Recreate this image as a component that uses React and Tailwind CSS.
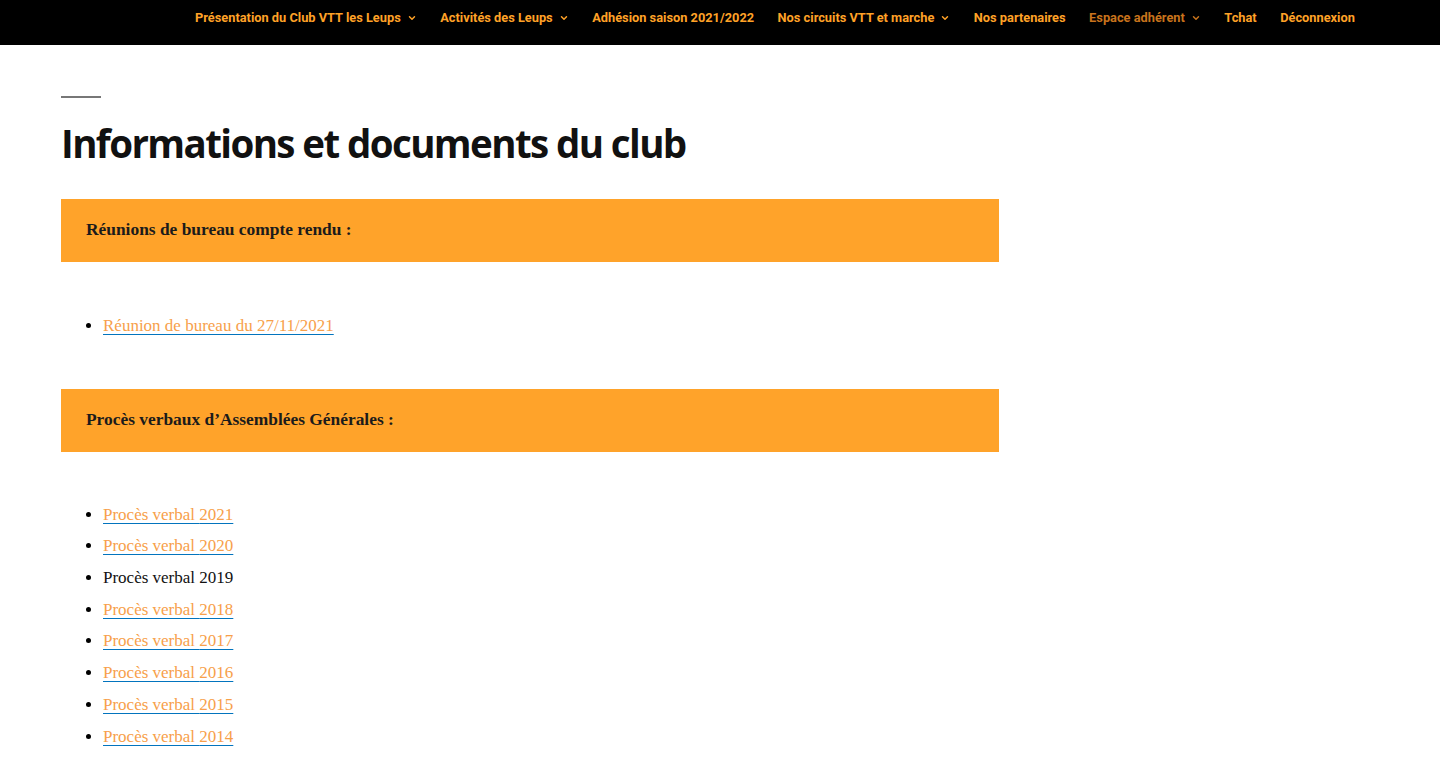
import { ChevronDown } from "lucide-react";

const navItems = [
  { label: "Présentation du Club VTT les Leups", menu: true },
  { label: "Activités des Leups", menu: true },
  { label: "Adhésion saison 2021/2022" },
  { label: "Nos circuits VTT et marche", menu: true },
  { label: "Nos partenaires" },
  { label: "Espace adhérent", menu: true, active: true },
  { label: "Tchat" },
  { label: "Déconnexion" },
];

const verbaux = [
  { year: "2021", link: true },
  { year: "2020", link: true },
  { year: "2019", link: false },
  { year: "2018", link: true },
  { year: "2017", link: true },
  { year: "2016", link: true },
  { year: "2015", link: true },
  { year: "2014", link: true },
];

const Item = ({ children, link = true }) => (
  <li className="h-[31.7px] leading-[31.7px]">
    {link ? (
      <a
        href="#"
        className="text-[#f7a04a] underline decoration-[#0274be] underline-offset-[3px]"
      >
        {children}
      </a>
    ) : (
      <span className="text-[#111]">{children}</span>
    )}
  </li>
);

const Banner = ({ children }) => (
  <div className="w-[938px] h-[63px] bg-[#ffa32a] flex items-center px-[25px]">
    <h3 className="font-['Liberation_Serif',serif] font-bold text-[17.4px] text-[#1b1b1b] pb-[2px]">
      {children}
    </h3>
  </div>
);

const App = () => {
  return (
    <div className="min-h-[783px] bg-white">
      <nav className="h-[45px] bg-black flex items-center pl-[195px] gap-[23.5px] font-['Roboto',sans-serif] font-bold text-[12.8px] pb-[10px]">
        {navItems.map((item) => (
          <a
            key={item.label}
            href="#"
            className={
              "flex items-center gap-[6px] " +
              (item.active ? "text-[#c8731c]" : "text-[#ffa227]")
            }
          >
            {item.label}
            {item.menu && <ChevronDown className="w-[10px] h-[10px]" strokeWidth={3.5} />}
          </a>
        ))}
      </nav>

      <main className="pl-[61px] pt-[51px] font-['Liberation_Serif',serif]">
        <div className="w-[40px] h-[2px] bg-[#777]" />
        <h1 className="mt-[20px] font-['Open_Sans',sans-serif] font-bold text-[38.5px] tracking-[-1.6px] text-[#111] leading-[50px]">
          Informations et documents du club
        </h1>

        <div className="mt-[31px]">
          <Banner>Réunions de bureau compte rendu :</Banner>
        </div>
        <ul className="list-disc pl-[42px] mt-[48px] text-[17px]">
          <Item>Réunion de bureau du 27/11/2021</Item>
        </ul>

        <div className="mt-[47px]">
          <Banner>Procès verbaux d’Assemblées Générales :</Banner>
        </div>
        <ul className="list-disc pl-[42px] mt-[47px] text-[17px]">
          {verbaux.map((v) => (
            <Item key={v.year} link={v.link}>
              Procès verbal {v.year}
            </Item>
          ))}
        </ul>
      </main>
    </div>
  );
};

export default App;
